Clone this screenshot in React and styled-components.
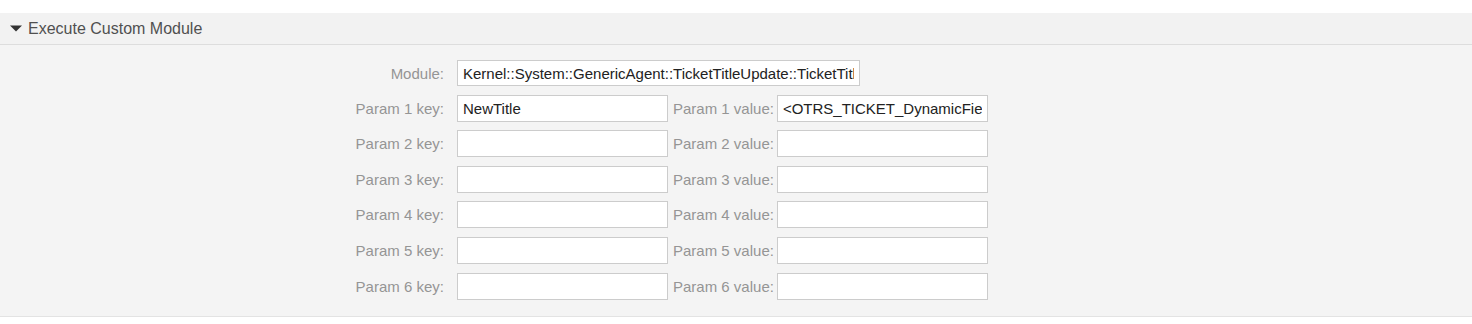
import React from 'react'
import styled, { createGlobalStyle } from 'styled-components';

const GlobalStyle = createGlobalStyle`
    html, body {
        margin: 0;
        padding: 0;
        background: #ffffff;
        font-family: 'Liberation Sans', Arial, Helvetica, sans-serif;
    }
`;

const Page = styled.div`
    padding-top: 13px;
`;

const Widget = styled.section`
    background-color: #f4f4f4;
    border-bottom: 1px solid #e3e3e3;
`;

const Header = styled.div`
    height: 31px;
    display: flex;
    align-items: center;
    gap: 6px;
    padding-left: 10px;
    background-color: #f2f2f2;
    border-bottom: 1px solid #dddddd;
`;

const Title = styled.h2`
    margin: 0;
    font-size: 16px;
    font-weight: 400;
    color: #505050;
    line-height: 31px;
`;

const Content = styled.div`
    padding: 15px 0 16px 0;
    display: flex;
    flex-direction: column;
    gap: 8.6px;
`;

const Row = styled.div`
    display: flex;
    align-items: center;
    height: ${p => p.$h || 27}px;
`;

const Label = styled.label`
    width: 457px;
    padding-right: 13px;
    box-sizing: border-box;
    text-align: right;
    font-size: 15px;
    color: #959595;
    white-space: nowrap;
`;

const InlineLabel = styled.label`
    padding: 0 3px 0 5px;
    font-size: 15px;
    color: #959595;
    white-space: nowrap;
`;

const Input = styled.input`
    width: ${p => p.$w}px;
    height: 100%;
    box-sizing: border-box;
    border: 1px solid #cccccc;
    background: #ffffff;
    padding: 0 5px;
    font-family: 'Liberation Sans', Arial, Helvetica, sans-serif;
    font-size: 15px;
    color: #222222;
    outline: none;
    margin: 0;
`;

const Caret = () => (
    <svg width="12" height="7" viewBox="0 0 12 7">
        <path d="M0 0.5 H12 L6 6.5 Z" fill="#333333" />
    </svg>
);

const params = [
    { key: 'NewTitle', value: '<OTRS_TICKET_DynamicField_' },
    { key: '', value: '' },
    { key: '', value: '' },
    { key: '', value: '' },
    { key: '', value: '' },
    { key: '', value: '' },
];

const App = () => {
    return (
        <Page>
            <GlobalStyle />
            <Widget>
                <Header>
                    <Caret />
                    <Title>Execute Custom Module</Title>
                </Header>
                <Content>
                    <Row $h={26}>
                        <Label>Module:</Label>
                        <Input $w={403} readOnly value="Kernel::System::GenericAgent::TicketTitleUpdate::TicketTitleUpdate" />
                    </Row>
                    {params.map((p, i) => (
                        <Row key={i}>
                            <Label>Param {i + 1} key:</Label>
                            <Input $w={211} readOnly value={p.key} />
                            <InlineLabel>Param {i + 1} value:</InlineLabel>
                            <Input $w={211} readOnly value={p.value} />
                        </Row>
                    ))}
                </Content>
            </Widget>
        </Page>
    )
}

export default App
